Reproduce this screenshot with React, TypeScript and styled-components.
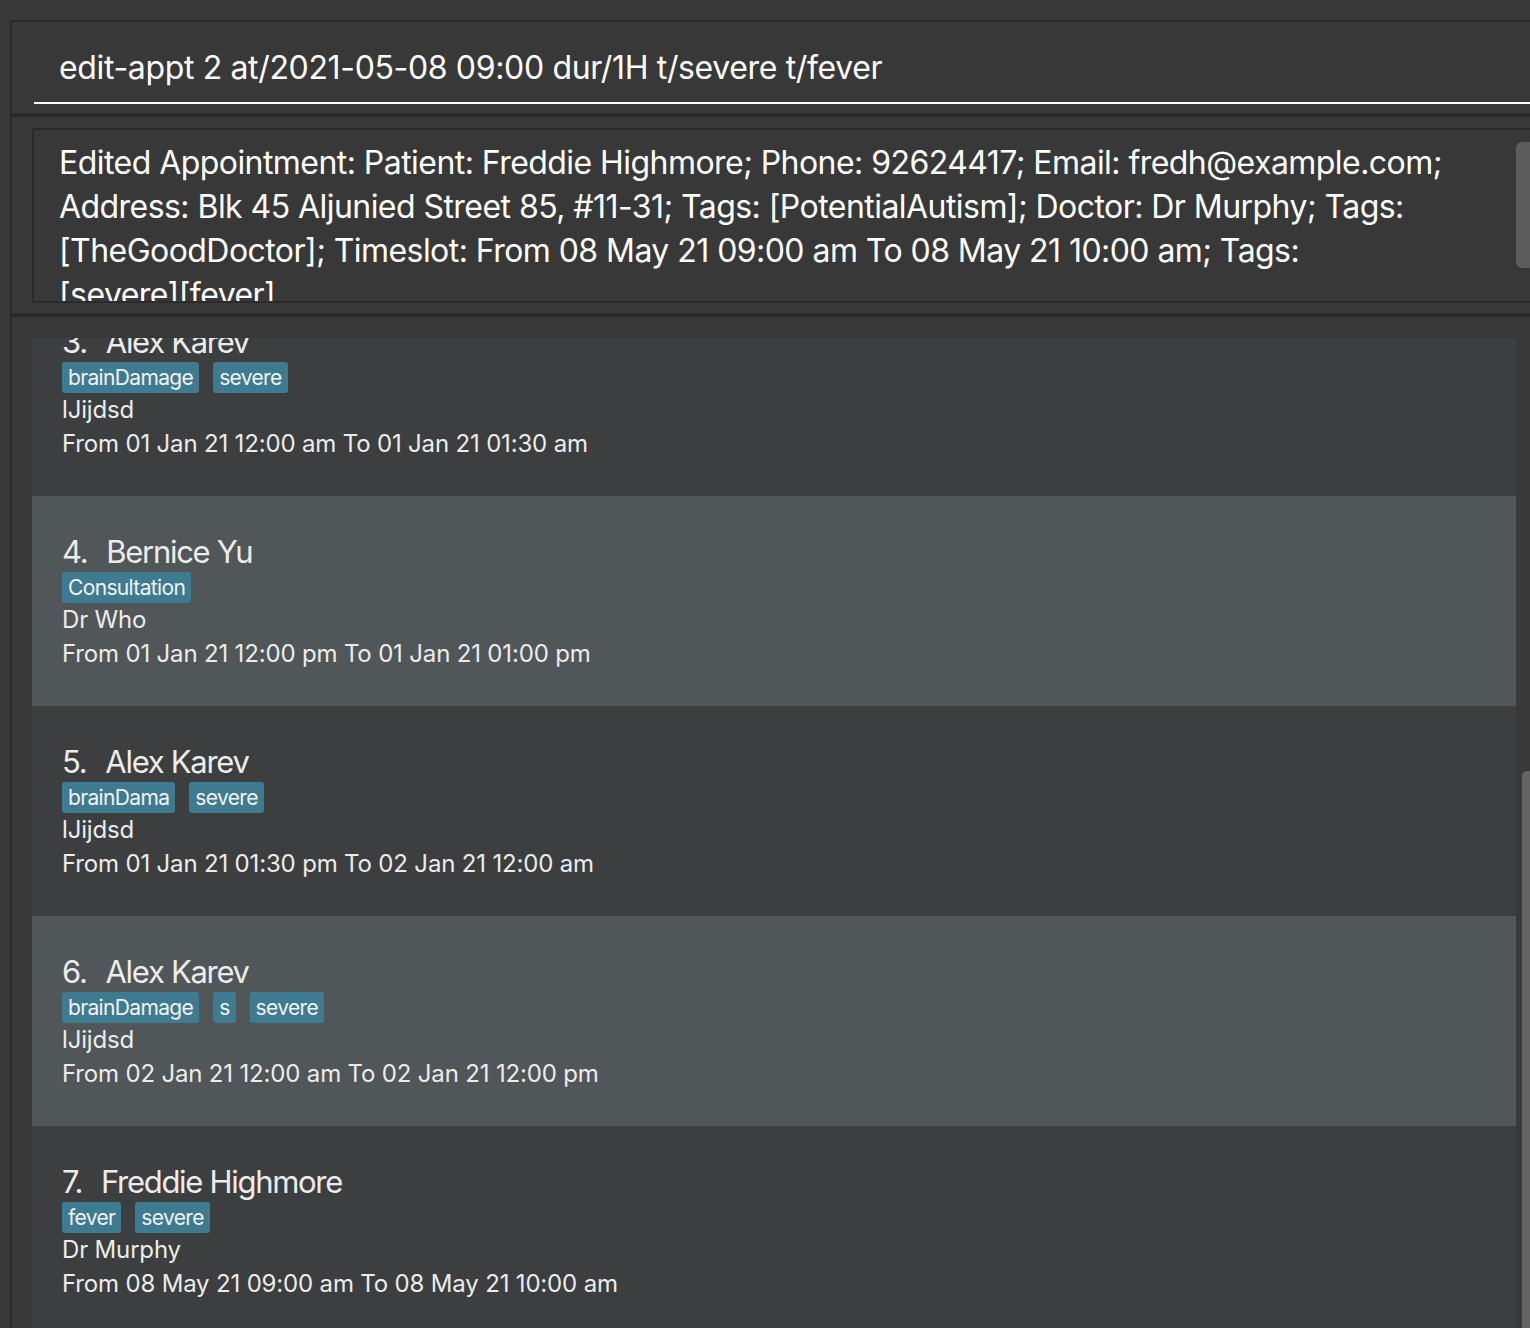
import React from "react";
import styled, { createGlobalStyle } from "styled-components";

const GlobalStyle = createGlobalStyle`
  html, body {
    margin: 0;
    padding: 0;
    background: #383838;
    overflow: hidden;
    height: 1328px;
  }
  * { box-sizing: border-box; }
`;

const FONT = `"Inter", "Open Sans", sans-serif`;

const Root = styled.div`
  padding: 20px 0 0 10px;
  height: 1328px;
  font-family: ${FONT};
`;

const Frame = styled.div`
  border-top: 2px solid #2b2b2b;
  border-left: 2px solid #2b2b2b;
  height: 1308px;
  display: flex;
  flex-direction: column;
`;

const CommandSection = styled.div`
  height: 95px;
  padding: 12px 0 0 22px;
  border-bottom: 4px solid #2b2b2b;
`;

const CommandInput = styled.div`
  height: 70px;
  line-height: 68px;
  padding-left: 25px;
  border-bottom: 2px solid #ffffff;
  color: #ffffff;
  font-size: 32px;
  letter-spacing: -0.35px;
  white-space: nowrap;
`;

const ResultSection = styled.div`
  height: 200px;
  padding: 11px 0 0 20px;
  border-bottom: 4px solid #2b2b2b;
`;

const ResultBox = styled.div`
  height: 175px;
  border: 2px solid #2b2b2b;
  border-right: none;
  display: flex;
  overflow: hidden;
`;

const ResultText = styled.div`
  flex: 1;
  padding: 11px 0 0 25px;
  color: #ffffff;
  font-size: 32px;
  line-height: 44px;
  letter-spacing: -0.55px;
`;

const ResultTextInner = styled.div`
  max-width: 1440px;
`;

const NoBreak = styled.span`
  white-space: nowrap;
`;

const ResultTrack = styled.div`
  width: 14px;
  flex: none;
  padding-top: 12px;
`;

const Thumb = styled.div<{ $h: number }>`
  width: 100%;
  height: ${(p) => p.$h}px;
  background: #5c5c5c;
  border-radius: 6px 0 0 6px;
`;

const ListSection = styled.div`
  flex: 1;
  min-height: 0;
  padding: 21px 0 0 20px;
  display: flex;
  gap: 6px;
`;

const ListViewport = styled.div`
  flex: 1;
  overflow: hidden;
`;

const ListInner = styled.div`
  margin-top: -52px;
`;

const ListTrack = styled.div`
  width: 8px;
  flex: none;
  padding-top: 433px;
`;

const ListThumb = styled.div`
  width: 100%;
  height: 700px;
  background: #646464;
  border-radius: 5px 0 0 5px;
`;

const Card = styled.div<{ $alt: boolean }>`
  height: 210px;
  padding: 36px 0 0 30px;
  background: ${(p) => (p.$alt ? "#515658" : "#3c3e40")};
  color: #ececec;
`;

const NameRow = styled.div`
  display: flex;
  gap: 19px;
  height: 40px;
  line-height: 40px;
  font-size: 31px;
  letter-spacing: -1.3px;
  white-space: nowrap;
`;

const TagRow = styled.div`
  display: flex;
  gap: 14px;
  height: 31px;
`;

const Tag = styled.span`
  display: inline-block;
  height: 31px;
  line-height: 31px;
  padding: 0 6px;
  background: #3e7b91;
  border-radius: 3px;
  color: #f2f2f2;
  font-size: 21px;
  letter-spacing: -0.65px;
`;

const Detail = styled.div`
  height: 34px;
  line-height: 34px;
  font-size: 24px;
  letter-spacing: -0.17px;
  white-space: nowrap;
`;

type Appt = {
  n: number;
  name: string;
  tags: string[];
  doctor: string;
  time: string;
};

const appts: Appt[] = [
  { n: 3, name: "Alex Karev", tags: ["brainDamage", "severe"], doctor: "lJijdsd", time: "From 01 Jan 21 12:00 am To 01 Jan 21 01:30 am" },
  { n: 4, name: "Bernice Yu", tags: ["Consultation"], doctor: "Dr Who", time: "From 01 Jan 21 12:00 pm To 01 Jan 21 01:00 pm" },
  { n: 5, name: "Alex Karev", tags: ["brainDama", "severe"], doctor: "lJijdsd", time: "From 01 Jan 21 01:30 pm To 02 Jan 21 12:00 am" },
  { n: 6, name: "Alex Karev", tags: ["brainDamage", "s", "severe"], doctor: "lJijdsd", time: "From 02 Jan 21 12:00 am To 02 Jan 21 12:00 pm" },
  { n: 7, name: "Freddie Highmore", tags: ["fever", "severe"], doctor: "Dr Murphy", time: "From 08 May 21 09:00 am To 08 May 21 10:00 am" },
];

export default function App() {
  return (
    <Root>
      <GlobalStyle />
      <Frame>
        <CommandSection>
          <CommandInput>edit-appt 2 at/2021-05-08 09:00 dur/1H t/severe t/fever</CommandInput>
        </CommandSection>
        <ResultSection>
          <ResultBox>
            <ResultText>
              <ResultTextInner>
                Edited Appointment: Patient: Freddie Highmore; Phone: 92624417; Email: fredh@example.com;
                Address: Blk 45 Aljunied Street 85, #11-31; Tags: [PotentialAutism]; Doctor: Dr Murphy; Tags:
                [TheGoodDoctor]; Timeslot: From 08 May 21 09:00 am To 08 May 21 10:00 am; Tags:{" "}
                <NoBreak>[severe][fever]</NoBreak>
              </ResultTextInner>
            </ResultText>
            <ResultTrack>
              <Thumb $h={126} />
            </ResultTrack>
          </ResultBox>
        </ResultSection>
        <ListSection>
          <ListViewport>
            <ListInner>
              {appts.map((a) => (
                <Card key={a.n} $alt={a.n % 2 === 0}>
                  <NameRow>
                    <span>{a.n}.</span>
                    <span>{a.name}</span>
                  </NameRow>
                  <TagRow>
                    {a.tags.map((t, i) => (
                      <Tag key={i}>{t}</Tag>
                    ))}
                  </TagRow>
                  <Detail>{a.doctor}</Detail>
                  <Detail>{a.time}</Detail>
                </Card>
              ))}
            </ListInner>
          </ListViewport>
          <ListTrack>
            <ListThumb />
          </ListTrack>
        </ListSection>
      </Frame>
    </Root>
  );
}
